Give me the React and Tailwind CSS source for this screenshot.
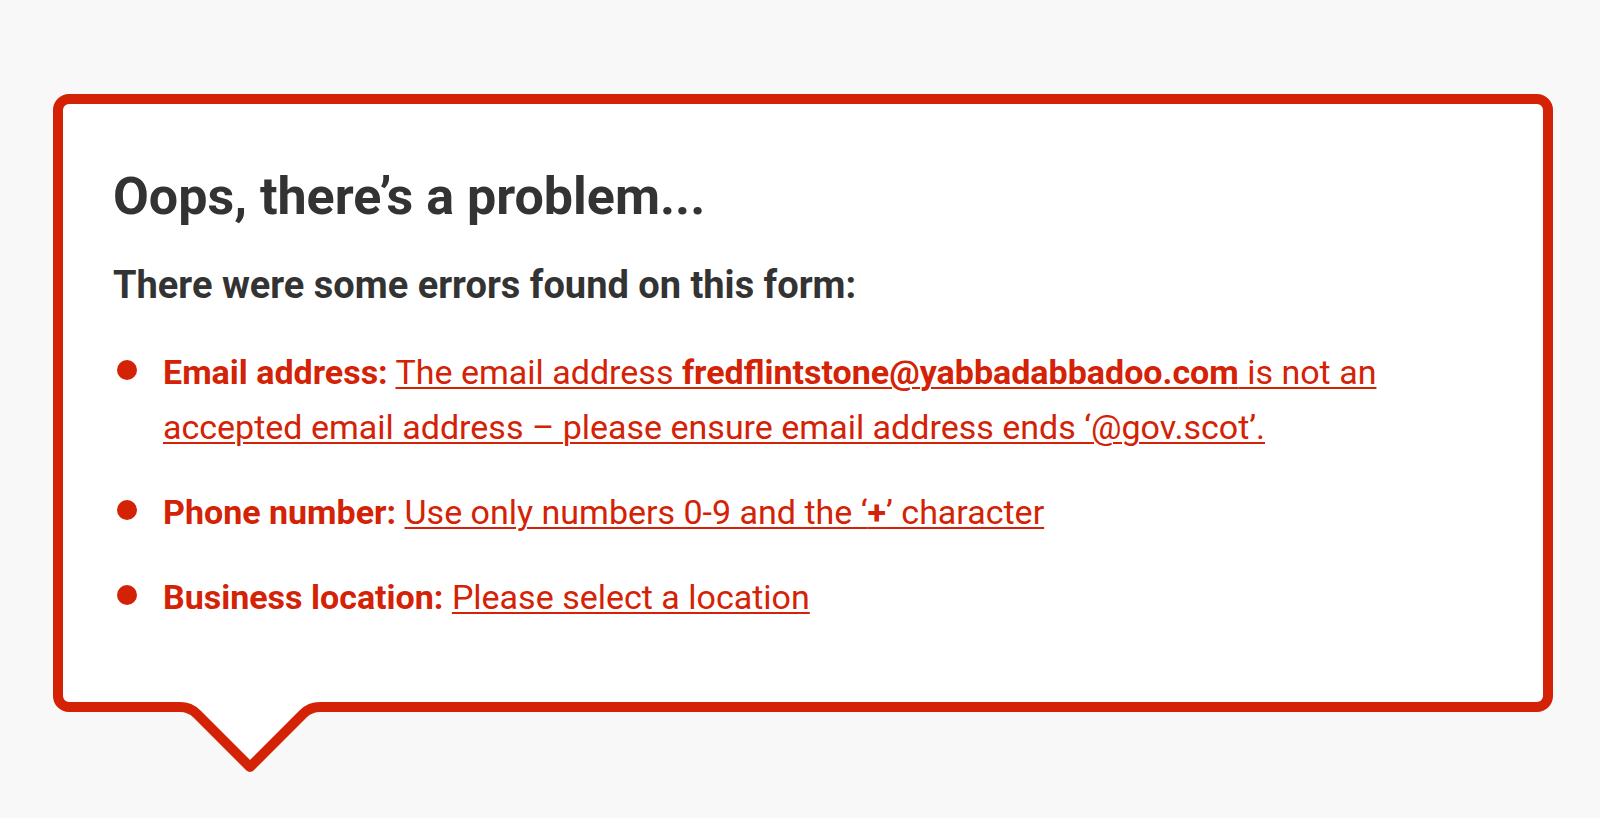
import React from "react";

const errors = [
  {
    label: "Email address:",
    message: (
      <>
        The email address <span className="font-bold">fredflintstone@yabbadabbadoo.com</span> is
        not an accepted email address – please ensure email address ends ‘@gov.scot’.
      </>
    ),
  },
  {
    label: "Phone number:",
    message: (
      <>
        Use only numbers 0-9 and the ‘<span className="font-bold">+</span>’ character
      </>
    ),
  },
  { label: "Business location:", message: "Please select a location" },
];

export default function App() {
  return (
    <div className="min-h-screen bg-[#f8f8f8] pt-[94px] font-['Roboto',sans-serif]">
      <div className="relative ml-[53px] w-[1500px]">
        <div className="rounded-[16px] border-[10px] border-[#d32205] bg-white pl-[50px] pr-[50px] pt-[63px] pb-[77px]">
          <h2 className="text-[52px] leading-[60px] font-bold text-[#333333]">
            Oops, there’s a problem...
          </h2>
          <p className="mt-[36px] text-[38px] leading-[44px] font-bold text-[#333333]">
            There were some errors found on this form:
          </p>
          <ul className="mt-[38px] flex flex-col gap-[30px]">
            {errors.map((err) => (
              <li key={err.label} className="flex items-start text-[34px] leading-[55px] text-[#d32205]">
                <span className="ml-[4px] mt-[15px] h-[20px] w-[20px] shrink-0 rounded-full bg-[#d32205]" />
                <div className="ml-[26px] max-w-[1260px]">
                  <span className="font-bold">{err.label}</span>{" "}
                  <a href="#" className="font-normal underline decoration-[1.5px] underline-offset-[3px]">
                    {err.message}
                  </a>
                </div>
              </li>
            ))}
          </ul>
        </div>
        {/* speech-bubble tail */}
        <svg
          className="absolute left-0 bottom-[-68px]"
          width="300"
          height="90"
          viewBox="0 0 300 90"
          fill="none"
        >
          <path
            d="M117 5 L117 17 L127 17 Q137 17 144 24 L197 77 L250 24 Q257 17 267 17 L277 17 L277 5 Z"
            fill="#ffffff"
          />
          <path
            d="M112 17 L127 17 Q137 17 144 24 L197 77 L250 24 Q257 17 267 17 L282 17"
            stroke="#d32205"
            strokeWidth="10"
            strokeLinejoin="round"
          />
        </svg>
      </div>
    </div>
  );
}
